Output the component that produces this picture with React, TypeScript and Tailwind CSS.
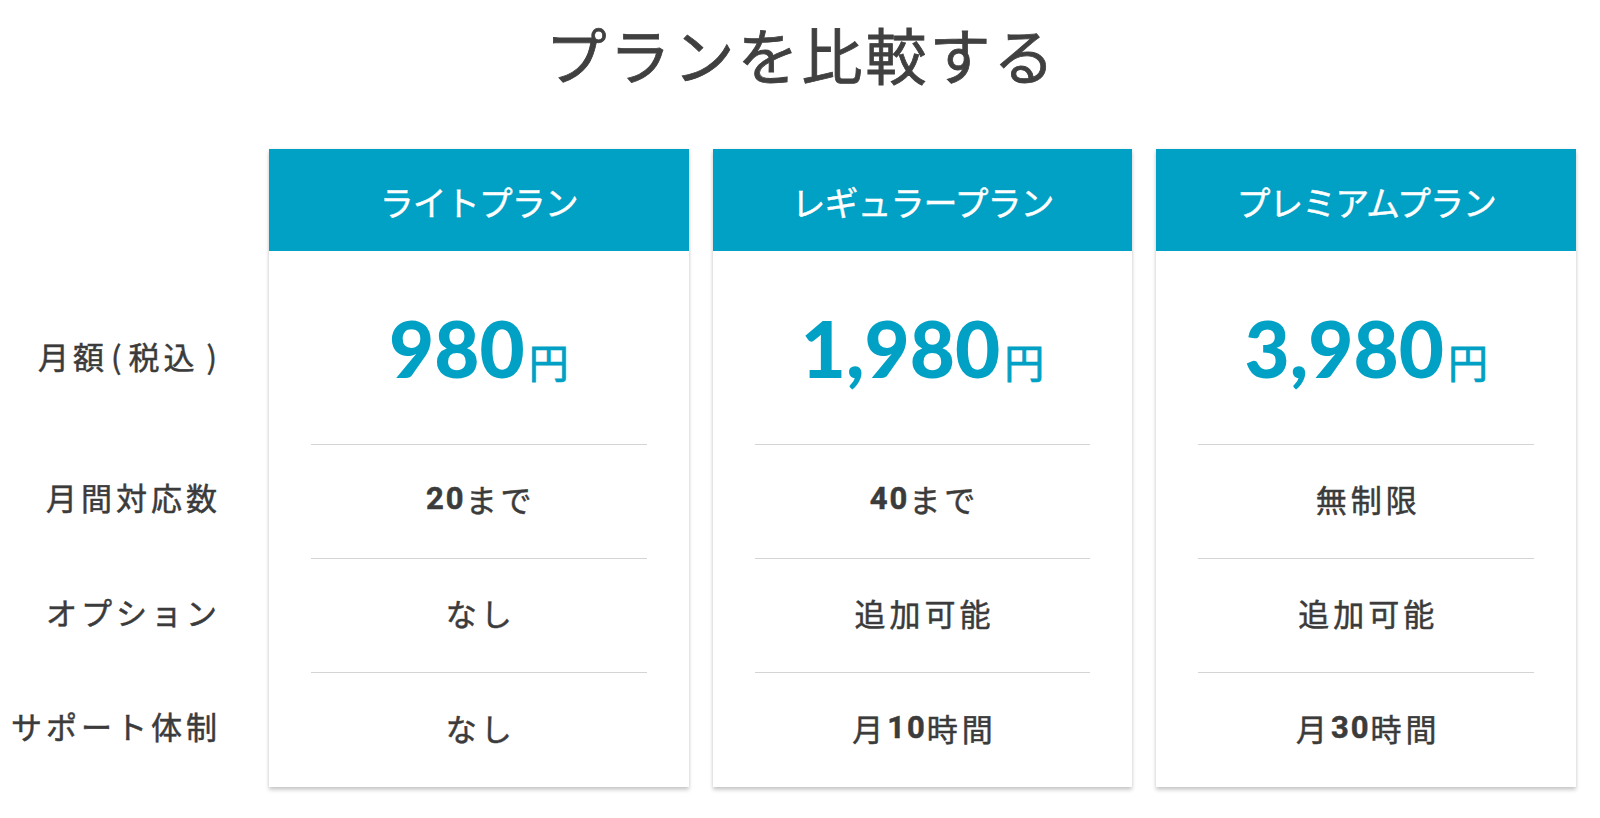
import React from "react";

const cjk = '"Noto Sans CJK JP", "Noto Sans", sans-serif';

type Plan = {
  name: string;
  price: string;
  count: React.ReactNode;
  option: React.ReactNode;
  support: React.ReactNode;
};

const B = ({ children }: { children: React.ReactNode }) => (
  <span className="font-bold tracking-[2px]" style={{ fontFamily: '"Roboto", "Liberation Sans", sans-serif' }}>
    {children}
  </span>
);

const plans: Plan[] = [
  {
    name: "ライトプラン",
    price: "980",
    count: (
      <>
        <B>20</B>まで
      </>
    ),
    option: "なし",
    support: "なし",
  },
  {
    name: "レギュラープラン",
    price: "1,980",
    count: (
      <>
        <B>40</B>まで
      </>
    ),
    option: "追加可能",
    support: (
      <>
        月<B>10</B>時間
      </>
    ),
  },
  {
    name: "プレミアムプラン",
    price: "3,980",
    count: "無制限",
    option: "追加可能",
    support: (
      <>
        月<B>30</B>時間
      </>
    ),
  },
];

function Divider() {
  return <div className="mx-auto w-[80%] h-px bg-[#d4d4d4]" />;
}

const rowCls =
  "flex items-center justify-center pb-[6px] text-[31px] tracking-[4px] leading-none text-[#3b3b3b] pl-[4px] [-webkit-text-stroke:0.5px_#3b3b3b]";

function Card({ plan }: { plan: Plan }) {
  return (
    <div className="flex-1 flex flex-col bg-white shadow-[0_3px_4px_rgba(0,0,0,0.2),0_0_3px_rgba(0,0,0,0.07)]">
      <div className="h-[102px] bg-[#00a1c4] flex items-center justify-center pt-[4px] text-white text-[34px] tracking-[-1px] leading-none [-webkit-text-stroke:0.4px_#ffffff]">
        {plan.name}
      </div>
      <div className="h-[193px] flex items-center justify-center">
        <div className="flex items-baseline text-[#00a1c4]">
          <span
            className="text-[78px] leading-none font-black"
            style={{ fontFamily: 'Lato, "Liberation Sans", sans-serif' }}
          >
            {plan.price}
          </span>
          <span className="ml-[4px] text-[40px] leading-none [-webkit-text-stroke:0.8px_#00a1c4]">円</span>
        </div>
      </div>
      <Divider />
      <div className={`h-[113px] ${rowCls}`}>{plan.count}</div>
      <Divider />
      <div className={`h-[113px] ${rowCls}`}>{plan.option}</div>
      <Divider />
      <div className={`h-[114px] ${rowCls}`}>{plan.support}</div>
    </div>
  );
}

export default function App() {
  return (
    <div className="w-[1600px] h-[818px] bg-white overflow-hidden" style={{ fontFamily: cjk }}>
      <div className="h-[112px] flex items-center justify-center pb-[6px] text-[61px] tracking-[3px] leading-none text-[#404040] pl-[3px] [-webkit-text-stroke:0.8px_#404040]">
        プランを比較する
      </div>
      <div className="mt-[37px] flex gap-[24px] pr-[24px]">
        <div className="w-[245px] shrink-0 flex flex-col pr-[24px] text-[31px] tracking-[4px] leading-none text-[#3b3b3b] [-webkit-text-stroke:0.5px_#3b3b3b]">
          <div className="h-[102px]" />
          <div className="h-[193px] flex items-center justify-end pt-[16px]">
            月額<span className="mx-[3px]">(</span>税込<span className="ml-[8px]">)</span>
          </div>
          <div className="h-[114px] flex items-center justify-end pb-[9px]">月間対応数</div>
          <div className="h-[114px] flex items-center justify-end pb-[8px]">オプション</div>
          <div className="h-[115px] flex items-center justify-end pb-[8px]">サポート体制</div>
        </div>
        {plans.map((p) => (
          <Card key={p.name} plan={p} />
        ))}
      </div>
    </div>
  );
}
